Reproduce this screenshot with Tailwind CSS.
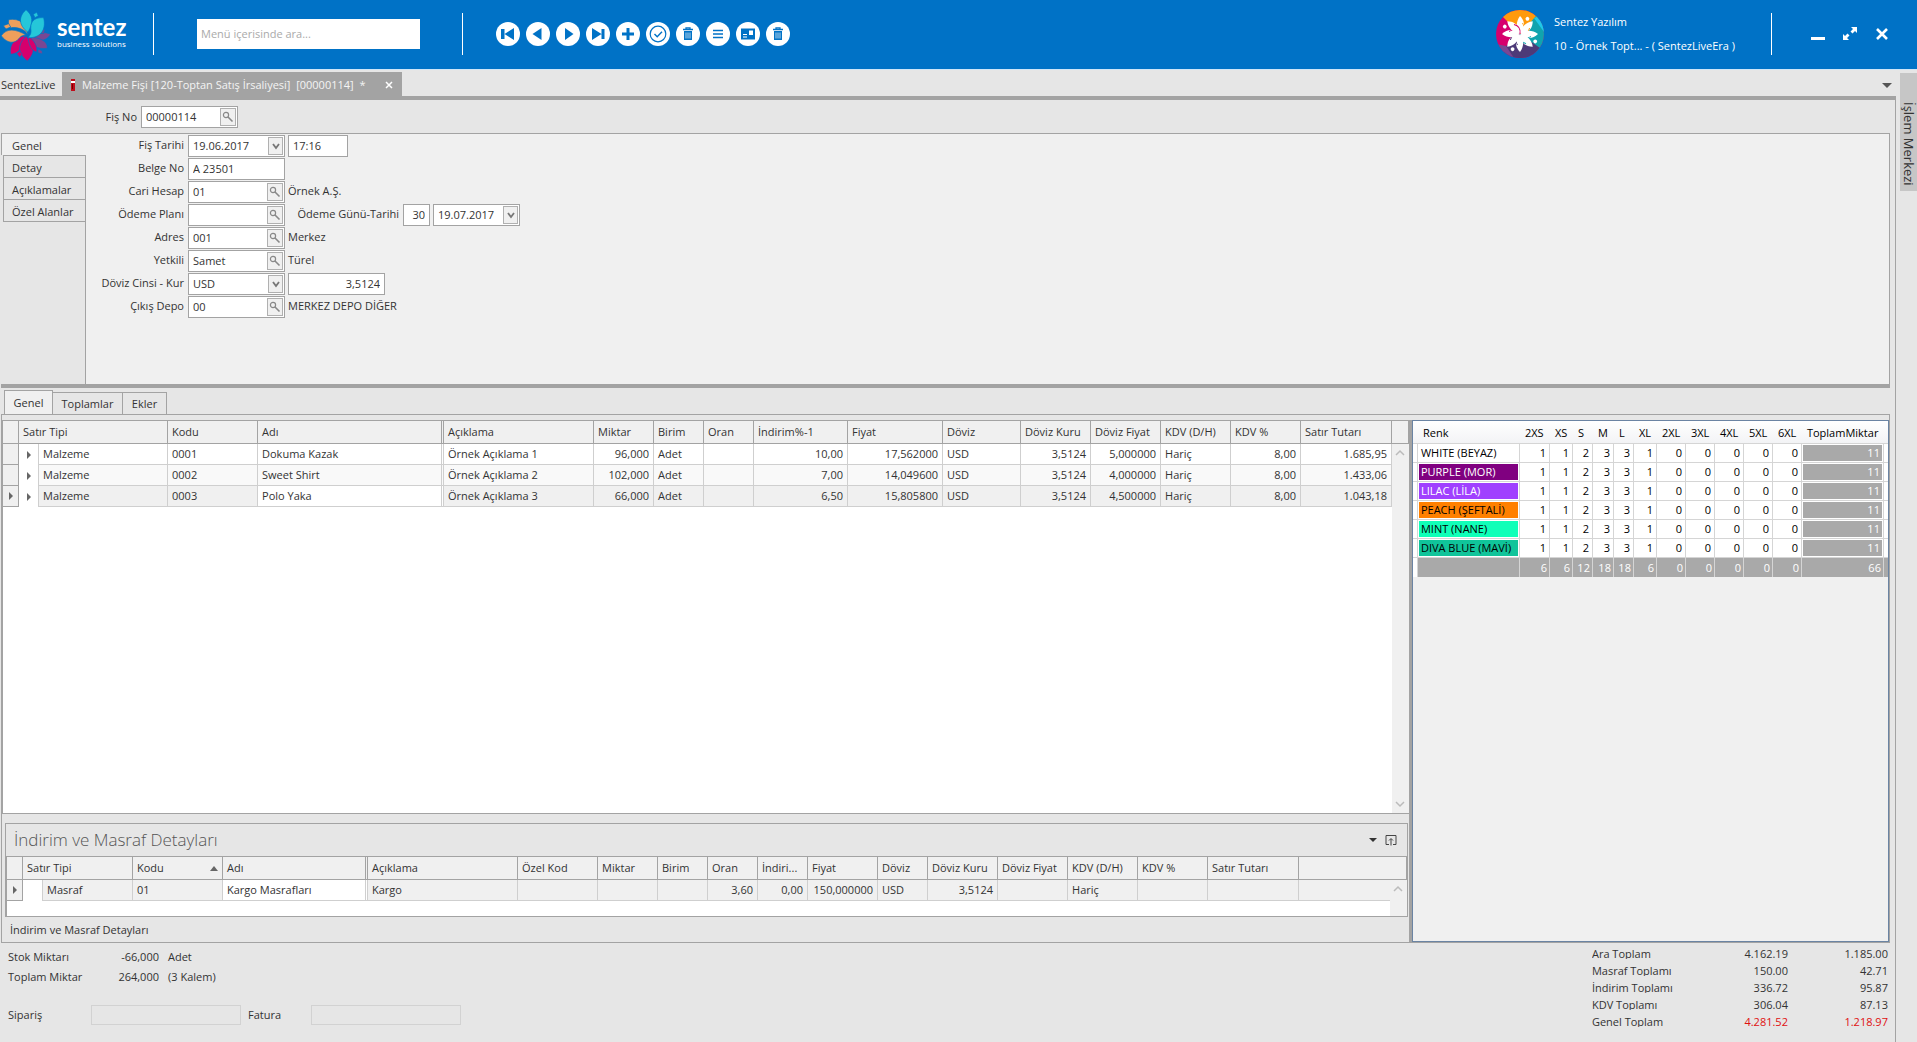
<!DOCTYPE html>
<html lang="tr">
<head>
    <meta charset="UTF-8">
    <meta name="viewport" content="width=device-width, initial-scale=1.0">
    <title>SentezLive - Malzeme Fişi</title>
    <script src="https://cdn.jsdelivr.net/npm/@tailwindcss/browser@4"></script>
</head>
<body class="flex min-h-screen flex-col bg-[#e6e6e6] font-['Open_Sans','Noto_Sans',sans-serif] text-[11px] leading-4 text-[#333]">

    <!-- Shared icons -->
    <svg class="hidden">
        <symbol id="i-search" viewBox="0 0 12 12"><circle cx="4" cy="4" r="2.6" fill="none" stroke="#888" stroke-width="1.2"/><path d="M6 6l4.500 4.500" stroke="#888" stroke-width="1.6"/></symbol>
        <symbol id="i-down" viewBox="0 0 12 12"><path d="M3 4l3 4 3-4" fill="none" stroke="#777" stroke-width="1.8"/></symbol>
        <symbol id="i-right" viewBox="0 0 4 8"><path d="M0 0l4 4-4 4z" fill="#666"/></symbol>
        <symbol id="i-trash" viewBox="0 0 24 24"><path d="M7 7.500h10M10 7V5.800h4V7" fill="none" stroke="currentColor" stroke-width="1.300"/><path d="M8 9h8v9H8z" fill="currentColor"/><path d="M10 10.500v6M12 10.500v6M14 10.500v6" stroke="#fff" stroke-width=".7"/></symbol>
    </svg>

    <!-- Header -->
    <header class="flex h-[70px] shrink-0 items-center border-b border-[#cfe6f8] bg-[#0072c6] pb-0.5 text-white">
        <svg class="h-[62px] w-[54px] shrink-0" viewBox="0 0 162 186" stroke="#0072c6" stroke-width="2">
            <g fill="#7a4793"><path d="M152 94C132 84 104 88 84 100c22 18 54 18 68-6z"/><path d="M142 136c2-24-28-34-58-34 6 26 30 38 58 34z"/><path d="M121 80l14-1-3 12-14 1zM114 138l12 5 1 10-13-4z"/></g>
            <g fill="#d6006d"><path d="M74 98c-30 6-48 28-42 56 28-2 44-30 42-56z"/><path d="M78 100c-24 22-28 50 4 74 28-28 20-50-4-74z"/><path d="M84 100c2 24 8 42 26 48 4-18-8-38-26-48z"/><path d="M50 152l9-8 8 9-8 10z"/></g>
            <g fill="#ee9f5c"><path d="M4 98c16-24 44-20 74-2-18 2-18 8-26 16C36 124 16 116 4 98z"/><path d="M26 50c34-6 58 16 56 44-8-18-36-22-48-20-8-4-10-14-8-24z"/><path d="M10 68l16-6 6 10-14 6z"/></g>
            <g fill="#25c7d9"><path d="M78 20c-22 20-24 46 6 68 16-30 16-50-6-68z"/><path d="M131 44c-32-2-42 16-38 40 0 10-4 14-9 20 36 2 56-22 47-60z"/><path d="M100 34l10-6 5 10-10 6z"/></g>
        </svg>
        <div class="ml-[3px] w-24 shrink-0 pb-1">
            <div class="font-['Lato','Open_Sans',sans-serif] text-2xl leading-6 font-bold">sentez</div>
            <div class="text-[8px] leading-[10px]">business solutions</div>
        </div>
        <div class="h-[42px] w-px shrink-0 bg-white"></div>
        <input type="text" aria-label="Menü içerisinde ara" placeholder="Menü içerisinde ara..." class="ml-[43px] h-[30px] w-[223px] min-w-0 bg-white px-1 text-[#333] placeholder:text-[#aaa] focus:outline-none">
        <div class="ml-[42px] h-[42px] w-px shrink-0 bg-white"></div>

        <!-- Record toolbar -->
        <nav class="ml-[33px] flex gap-1.5 text-[#0072c6]">
            <button aria-label="İlk" class="size-6 rounded-full bg-white"><svg viewBox="0 0 24 24"><path d="M5 7h3.500v10H5zM18 6v12L8.500 12z" fill="currentColor"/></svg></button>
            <button aria-label="Önceki" class="size-6 rounded-full bg-white"><svg viewBox="0 0 24 24"><path d="M15.500 6v12L6.500 12z" fill="currentColor"/></svg></button>
            <button aria-label="Sonraki" class="size-6 rounded-full bg-white"><svg viewBox="0 0 24 24"><path d="M9 6v12l8.500-6z" fill="currentColor"/></svg></button>
            <button aria-label="Son" class="size-6 rounded-full bg-white"><svg viewBox="0 0 24 24"><path d="M6 6v12l9.500-6zM15.500 7h3v10h-3z" fill="currentColor"/></svg></button>
            <button aria-label="Yeni" class="size-6 rounded-full bg-white"><svg viewBox="0 0 24 24"><path d="M12 6v12M6 12h12" stroke="currentColor" stroke-width="3"/></svg></button>
            <button aria-label="Kaydet" class="size-6 rounded-full bg-white"><svg viewBox="0 0 24 24" fill="none" stroke="currentColor"><circle cx="12" cy="12" r="7.800" stroke-width="1.200"/><path d="M8.500 12l2.700 2.800 4.800-5" stroke-width="1.400"/></svg></button>
            <button aria-label="Sil" class="size-6 rounded-full bg-white"><svg class="size-6"><use href="#i-trash"/></svg></button>
            <button aria-label="Liste" class="size-6 rounded-full bg-white"><svg viewBox="0 0 24 24"><path d="M7 8.500h10M7 12h10M7 15.500h10" stroke="currentColor" stroke-width="1.400"/></svg></button>
            <button aria-label="Kart" class="size-6 rounded-full bg-white"><svg viewBox="0 0 24 24"><path d="M5 6.500h14v11H5z" fill="currentColor"/><path d="M13 8.500h4V13h-4zM7 12h4v1H7zM7 14.500h4v1H7z" fill="#fff"/></svg></button>
            <button aria-label="Temizle" class="size-6 rounded-full bg-white"><svg class="size-6"><use href="#i-trash"/></svg></button>
        </nav>

        <!-- User -->
        <div class="ml-auto flex shrink-0 items-center">
            <svg class="size-12" viewBox="0 0 48 48">
                <clipPath id="round"><circle cx="24" cy="24" r="24"/></clipPath>
                <g clip-path="url(#round)">
                    <path d="M0 0h48v48H0z" fill="#d6006d"/>
                    <path d="M24 24L4 4V0h40v4z" fill="#ff9a0c"/>
                    <path d="M24 24L40 6l8 0v36h-8z" fill="#10a4ae"/>
                    <path d="M38 8l10 14V4z" fill="#1fc8ea"/>
                    <path d="M24 24L8 38v10h36V38z" fill="#4d3a78"/>
                    <path d="M0 34l10 2 8 12H4z" fill="#7a4793"/>
                </g>
                <g fill="#fff" id="avatar-petals"></g>
            </svg>
            <div class="ml-2.5 flex w-[217px] flex-col gap-2">
                <span>Sentez Yazılım</span>
                <span>10 - Örnek Topt... - ( SentezLiveEra )</span>
            </div>
            <div class="h-[42px] w-px bg-white"></div>
            <button aria-label="Küçült" class="ml-[38px]"><svg class="size-4" viewBox="0 0 16 16"><path d="M1 12.500h14" stroke="#fff" stroke-width="3"/></svg></button>
            <button aria-label="Büyüt" class="ml-4"><svg class="size-4" viewBox="0 0 16 16"><path d="M9 1h6v6l-2-2-2.500 2.500-2-2L11 3zM1 14V8l2 2 2.500-2.500 2 2L5 12l2 2z" fill="#fff"/></svg></button>
            <button aria-label="Kapat" class="mr-[27px] ml-4"><svg class="size-4" viewBox="0 0 16 16"><path d="M3 3l10 10M13 3L3 13" stroke="#fff" stroke-width="2.600"/></svg></button>
        </div>
    </header>

    <div class="flex grow">
        <div class="flex min-w-0 grow flex-col">

            <!-- Document tabs -->
            <div class="flex h-[30px] shrink-0 items-end border-b-4 border-[#a3a3a3]">
                <button class="h-6 w-[62px] pt-0.5 pl-px text-left">SentezLive</button>
                <div class="flex h-6 w-[340px] items-center bg-[#a3a3a3] px-2 pt-0.5 text-[#f4f4f4]">
                    <svg class="h-3.5 w-1.5" viewBox="0 0 6 14"><path d="M1 1h4v12H1z" fill="#c00d1c"/><path d="M1 3h4v2H1z" fill="#fff"/><path d="M2 6h1v5H2z" fill="#700"/></svg>
                    <span class="ml-1.5 whitespace-pre">Malzeme Fişi [120-Toptan Satış İrsaliyesi]  [00000114]  *</span>
                    <button aria-label="Sekmeyi kapat" class="ml-auto"><svg class="size-2.5" viewBox="0 0 10 10"><path d="M2 2l6 6M8 2L2 8" stroke="#fff" stroke-width="1.500"/></svg></button>
                </div>
                <button aria-label="Sekmeler" class="mr-1 mb-2 ml-auto"><svg class="h-[5px] w-2.5" viewBox="0 0 10 5"><path d="M0 0h10L5 5z" fill="#555"/></svg></button>
            </div>

            <main class="flex grow flex-col border-r border-[#a3a3a3] pr-[5px]">

                <div class="flex h-[33px] items-center">
                    <label for="fisNo" class="w-[137px] text-right">Fiş No</label>
                    <div class="ml-1 flex h-[22px] w-[97px] items-center border border-[#a3a3a3] bg-white pr-px">
                        <input id="fisNo" value="00000114" class="w-full min-w-0 pl-1 focus:outline-none">
                        <button aria-label="Fiş ara" class="flex h-[18px] w-4 shrink-0 items-center justify-center border border-[#b0b0b0] bg-[#f0f0f0]"><svg class="size-3"><use href="#i-search"/></svg></button>
                    </div>
                </div>

                <!-- Form -->
                <section class="ml-px flex h-[251px]">
                    <div class="flex w-[85px] flex-col">
                        <button class="h-[22px] border-t border-l border-[#a3a3a3] bg-[#f0f0f0] pt-0.5 pl-[10px] text-left">Genel</button>
                        <button class="ml-0.5 h-[22px] border-t border-r border-l border-[#a3a3a3] pt-0.5 pl-2 text-left">Detay</button>
                        <button class="ml-0.5 h-[22px] border-t border-r border-l border-[#a3a3a3] pt-0.5 pl-2 text-left">Açıklamalar</button>
                        <button class="ml-0.5 h-[23px] border border-[#a3a3a3] pt-0.5 pl-2 text-left">Özel Alanlar</button>
                        <div class="grow border-r border-[#a3a3a3]"></div>
                    </div>
                    <div class="grow border-t border-r border-[#a3a3a3] bg-[#f0f0f0] pt-px">
                        <div class="grid grid-cols-[98px_98px_1fr] gap-x-[3px] gap-y-px [&>label]:pt-0.5 [&>label]:text-right [&>span]:pt-0.5">
                            <label for="tarih">Fiş Tarihi</label>
                            <div class="ml-px flex h-[22px] items-center border border-[#a3a3a3] bg-white pr-px">
                                <input id="tarih" value="19.06.2017" class="w-full min-w-0 pl-1 focus:outline-none">
                                <button aria-label="Takvim" class="flex h-[18px] w-[15px] shrink-0 items-center justify-center border border-[#b0b0b0] bg-[#f0f0f0]"><svg class="size-3"><use href="#i-down"/></svg></button>
                            </div>
                            <input aria-label="Saat" value="17:16" class="h-[22px] w-[60px] border border-[#a3a3a3] bg-white pb-px pl-1">

                            <label for="belge">Belge No</label>
                            <input id="belge" value="A 23501" class="ml-px h-[22px] min-w-0 border border-[#a3a3a3] bg-white pb-px pl-1">
                            <span></span>

                            <label for="cari">Cari Hesap</label>
                            <div class="ml-px flex h-[22px] items-center border border-[#a3a3a3] bg-white pr-px">
                                <input id="cari" value="01" class="w-full min-w-0 pl-1 focus:outline-none">
                                <button aria-label="Cari ara" class="flex h-[18px] w-4 shrink-0 items-center justify-center border border-[#b0b0b0] bg-[#f0f0f0]"><svg class="size-3"><use href="#i-search"/></svg></button>
                            </div>
                            <span>Örnek A.Ş.</span>

                            <label for="plan">Ödeme Planı</label>
                            <div class="ml-px flex h-[22px] items-center border border-[#a3a3a3] bg-white pr-px">
                                <input id="plan" class="w-full min-w-0 pl-1 focus:outline-none">
                                <button aria-label="Plan ara" class="flex h-[18px] w-4 shrink-0 items-center justify-center border border-[#b0b0b0] bg-[#f0f0f0]"><svg class="size-3"><use href="#i-search"/></svg></button>
                            </div>
                            <div class="flex">
                                <label for="gun" class="w-[111px] pt-0.5 text-right">Ödeme Günü-Tarihi</label>
                                <input id="gun" value="30" class="ml-1 h-[22px] w-[27px] border border-[#a3a3a3] bg-white pr-1 pb-px text-right">
                                <div class="ml-[3px] flex h-[22px] w-[87px] items-center border border-[#a3a3a3] bg-white pr-px">
                                    <input aria-label="Ödeme tarihi" value="19.07.2017" class="w-full min-w-0 pl-1 focus:outline-none">
                                    <button aria-label="Takvim" class="flex h-[18px] w-[15px] shrink-0 items-center justify-center border border-[#b0b0b0] bg-[#f0f0f0]"><svg class="size-3"><use href="#i-down"/></svg></button>
                                </div>
                            </div>

                            <label for="adres">Adres</label>
                            <div class="ml-px flex h-[22px] items-center border border-[#a3a3a3] bg-white pr-px">
                                <input id="adres" value="001" class="w-full min-w-0 pl-1 focus:outline-none">
                                <button aria-label="Adres ara" class="flex h-[18px] w-4 shrink-0 items-center justify-center border border-[#b0b0b0] bg-[#f0f0f0]"><svg class="size-3"><use href="#i-search"/></svg></button>
                            </div>
                            <span>Merkez</span>

                            <label for="yetkili">Yetkili</label>
                            <div class="ml-px flex h-[22px] items-center border border-[#a3a3a3] bg-white pr-px">
                                <input id="yetkili" value="Samet" class="w-full min-w-0 pl-1 focus:outline-none">
                                <button aria-label="Yetkili ara" class="flex h-[18px] w-4 shrink-0 items-center justify-center border border-[#b0b0b0] bg-[#f0f0f0]"><svg class="size-3"><use href="#i-search"/></svg></button>
                            </div>
                            <span>Türel</span>

                            <label for="doviz">Döviz Cinsi - Kur</label>
                            <div class="relative ml-px h-[22px] border border-[#a3a3a3] bg-white">
                                <select id="doviz" class="h-full w-full appearance-none pl-1 focus:outline-none">
                                    <option>USD</option>
                                    <option>EUR</option>
                                </select>
                                <span class="pointer-events-none absolute top-px right-px flex h-[18px] w-[15px] items-center justify-center border border-[#b0b0b0] bg-[#f0f0f0]"><svg class="size-3"><use href="#i-down"/></svg></span>
                            </div>
                            <input aria-label="Kur" value="3,5124" class="h-[22px] w-[97px] border border-[#a3a3a3] bg-white pr-1 pb-px text-right">

                            <label for="depo">Çıkış Depo</label>
                            <div class="ml-px flex h-[22px] items-center border border-[#a3a3a3] bg-white pr-px">
                                <input id="depo" value="00" class="w-full min-w-0 pl-1 focus:outline-none">
                                <button aria-label="Depo ara" class="flex h-[18px] w-4 shrink-0 items-center justify-center border border-[#b0b0b0] bg-[#f0f0f0]"><svg class="size-3"><use href="#i-search"/></svg></button>
                            </div>
                            <span>MERKEZ DEPO DİĞER</span>
                        </div>
                    </div>
                </section>

                <div class="ml-px h-1 bg-[#a3a3a3]"></div>

                <!-- Detail tabs -->
                <div class="flex h-[26px] items-end pl-1">
                    <button class="h-6 w-[49px] border-t border-r border-l border-[#a3a3a3] bg-[#f0f0f0]">Genel</button>
                    <button class="h-[22px] w-[70px] border-t border-r border-[#a3a3a3]">Toplamlar</button>
                    <button class="h-[22px] w-11 border-t border-r border-[#a3a3a3]">Ekler</button>
                </div>

                <section class="ml-px flex grow border border-[#a3a3a3]">
                    <!-- Left: lines + discount details -->
                    <div class="flex min-w-0 grow flex-col pt-[5px]">
                        <div class="flex grow flex-col border-y border-l border-[#a3a3a3] bg-white">
                            <table class="w-full table-fixed border-separate border-spacing-0 whitespace-nowrap">
                                <colgroup id="line-cols"></colgroup>
                                <thead><tr id="line-head" class="h-[23px] bg-[#f0f0f0] text-left"></tr></thead>
                                <tbody id="line-rows"></tbody>
                            </table>
                            <div class="-mt-[63px] ml-auto flex w-[17px] grow flex-col items-center justify-between bg-[#f0f0f0] py-1">
                                <svg class="size-2.5" viewBox="0 0 10 10"><path d="M1 7l4-4 4 4" fill="none" stroke="#bbb" stroke-width="1.500"/></svg>
                                <svg class="size-2.5" viewBox="0 0 10 10"><path d="M1 3l4 4 4-4" fill="none" stroke="#bbb" stroke-width="1.500"/></svg>
                            </div>
                        </div>

                        <div class="mt-[9px] mr-px ml-[3px] h-[94px] border border-[#a3a3a3]">
                            <div class="flex h-8 items-center justify-between pr-2.5 pl-2">
                                <h2 class="text-[17px] font-light text-[#555]">İndirim ve Masraf Detayları</h2>
                                <div class="flex items-center gap-2">
                                    <button aria-label="Menü"><svg class="h-1 w-2" viewBox="0 0 8 4"><path d="M0 0h8L4 4z" fill="#333"/></svg></button>
                                    <button aria-label="Sabitle"><svg class="size-3" viewBox="0 0 12 12" fill="none" stroke="#444"><path d="M4 10.500H1v-9h10v9H8M6 11.500V5M4 6.500l2-2 2 2"/></svg></button>
                                </div>
                            </div>
                            <div class="h-[60px] border-t border-l border-[#a3a3a3] bg-white">
                                <table class="w-full table-fixed border-separate border-spacing-0 whitespace-nowrap">
                                    <colgroup id="cost-cols"></colgroup>
                                    <thead><tr id="cost-head" class="h-[23px] bg-[#f0f0f0] text-left"></tr></thead>
                                    <tbody id="cost-rows"></tbody>
                                </table>
                                <div class="-mt-[21px] ml-auto h-9 w-[17px] bg-[#f0f0f0] pt-1">
                                    <svg class="mx-auto size-2.5" viewBox="0 0 10 10"><path d="M1 7l4-4 4 4" fill="none" stroke="#bbb" stroke-width="1.500"/></svg>
                                </div>
                            </div>
                        </div>
                        <div class="flex h-[25px] items-center pt-px pl-2">İndirim ve Masraf Detayları</div>
                    </div>

                    <!-- Right: colour / size matrix -->
                    <div class="mt-[5px] w-[480px] shrink-0 border-l-[3px] border-[#a3a3a3]">
                        <div class="h-full border border-[#6b84a3] bg-[#f0f0f0] text-black">
                            <table class="w-full table-fixed border-separate border-spacing-0 whitespace-nowrap">
                                <colgroup id="size-cols"></colgroup>
                                <thead><tr id="size-head" class="h-[23px] bg-linear-to-b from-white to-[#f2f3f5] text-left"></tr></thead>
                                <tbody id="size-rows"></tbody>
                            </table>
                        </div>
                    </div>
                </section>

                <!-- Footer totals -->
                <footer class="flex h-[99px] justify-between">
                    <div class="pt-1.5 pl-2">
                        <div class="grid grid-cols-[83px_68px_1fr] gap-y-1">
                            <span>Stok Miktarı</span><span class="text-right">-66,000</span><span class="pl-[9px]">Adet</span>
                            <span>Toplam Miktar</span><span class="text-right">264,000</span><span class="pl-[9px]">(3 Kalem)</span>
                        </div>
                        <div class="mt-5 flex items-center">
                            <label for="siparis" class="w-[83px]">Sipariş</label>
                            <input id="siparis" disabled class="h-5 w-[150px] border border-[#d2d2d2]">
                            <label for="fatura" class="w-[70px] pl-[7px]">Fatura</label>
                            <input id="fatura" disabled class="h-5 w-[150px] border border-[#d2d2d2]">
                        </div>
                    </div>
                    <dl id="totals" class="grid h-[85px] grid-cols-[99px_97px_100px] pt-0.5 pr-0.5"></dl>
                </footer>
            </main>
        </div>

        <!-- Collapsed side panel -->
        <aside class="w-[21px] shrink-0 pt-[3px] pl-1">
            <button class="h-[118px] w-full bg-[#c6c6c6] pt-[29px] text-left text-[13px] leading-[17px] whitespace-nowrap [writing-mode:vertical-rl]">İşlem Merkezi</button>
        </aside>
    </div>

    <script>
        const $ = (id) => document.getElementById(id);
        const cols = (list) => list.map((w) => `<col${w ? ` style="width:${w}px"` : ''}>`).join('');
        const arrow = '<svg class="mx-auto h-2 w-1"><use href="#i-right"/></svg>';

        const headCell = (text, i) => `
            <th ${i === 1 ? 'colspan="2"' : ''} class="overflow-hidden border-b border-[#a3a3a3] ${text === 'Adı' ? 'border-r-3 border-double' : 'border-r'} px-1 font-normal">${text}</th>`;

        // kinds: l = text, r = number, e = expander, h = row handle
        function gridRow(cells, kinds, bg, editing) {
            return `<tr class="h-[21px] ${bg}">` + cells.map((text, i) => {
                const kind = kinds[i];
                if (kind === 'h') return `<td class="border-r border-b border-[#a3a3a3] bg-[#f0f0f0]">${text}</td>`;
                if (kind === 'e') return `<td class="border-r border-[#cfcfcf] bg-white">${text}</td>`;
                const line = i === 4 ? 'border-r-3 border-double' : 'border-r';
                const fill = i === 4 && editing ? 'bg-white' : '';
                const align = kind === 'r' ? 'text-right' : '';
                return `<td class="border-b border-[#cfcfcf] px-1 ${line} ${fill} ${align}">${text}</td>`;
            }).join('') + '</tr>';
        }

        // Document lines
        $('line-cols').innerHTML = cols([16, 20, 129, 90, 186, 150, 60, 50, 50, 94, 95, 78, 70, 70, 70, 70, 91, 0]);
        $('line-head').innerHTML = ['', 'Satır Tipi', 'Kodu', 'Adı', 'Açıklama', 'Miktar', 'Birim', 'Oran', 'İndirim%-1', 'Fiyat', 'Döviz', 'Döviz Kuru', 'Döviz Fiyat', 'KDV (D/H)', 'KDV %', 'Satır Tutarı', ''].map(headCell).join('');
        const lineKinds = 'hellllrllrrlrrlrr';
        $('line-rows').innerHTML =
            gridRow(['', arrow, 'Malzeme', '0001', 'Dokuma Kazak', 'Örnek Açıklama 1', '96,000', 'Adet', '', '10,00', '17,562000', 'USD', '3,5124', '5,000000', 'Hariç', '8,00', '1.685,95'], lineKinds, 'bg-white', false) +
            gridRow(['', arrow, 'Malzeme', '0002', 'Sweet Shirt', 'Örnek Açıklama 2', '102,000', 'Adet', '', '7,00', '14,049600', 'USD', '3,5124', '4,000000', 'Hariç', '8,00', '1.433,06'], lineKinds, 'bg-[#f9f9f9]', false) +
            gridRow([arrow, arrow, 'Malzeme', '0003', 'Polo Yaka', 'Örnek Açıklama 3', '66,000', 'Adet', '', '6,50', '15,805800', 'USD', '3,5124', '4,500000', 'Hariç', '8,00', '1.043,18'], lineKinds, 'bg-[#f0f0f0]', true);

        // Discounts and costs
        const sorted = '<span class="flex items-center justify-between">Kodu<svg class="h-[5px] w-2" viewBox="0 0 8 5"><path d="M0 5h8L4 0z" fill="#666"/></svg></span>';
        $('cost-cols').innerHTML = cols([16, 20, 90, 90, 145, 150, 80, 60, 50, 50, 50, 70, 50, 70, 70, 70, 70, 91, 0]);
        $('cost-head').innerHTML = ['', 'Satır Tipi', sorted, 'Adı', 'Açıklama', 'Özel Kod', 'Miktar', 'Birim', 'Oran', 'İndiri...', 'Fiyat', 'Döviz', 'Döviz Kuru', 'Döviz Fiyat', 'KDV (D/H)', 'KDV %', 'Satır Tutarı', ''].map(headCell).join('');
        $('cost-rows').innerHTML =
            gridRow([arrow, '', 'Masraf', '01', 'Kargo Masrafları', 'Kargo', '', '', '', '3,60', '0,00', '150,000000', 'USD', '3,5124', '', 'Hariç', '', '', ''], 'helllllllrrrlrlllll', 'bg-[#f0f0f0]', true);

        // Size matrix
        const sizes = ['2XS', 'XS', 'S', 'M', 'L', 'XL', '2XL', '3XL', '4XL', '5XL', '6XL'];
        const colours = [
            ['WHITE (BEYAZ)', 'bg-white'],
            ['PURPLE (MOR)', 'bg-[#800080] text-white'],
            ['LILAC (LİLA)', 'bg-[#a040ff] text-white'],
            ['PEACH (ŞEFTALİ)', 'bg-[#ff8000]'],
            ['MINT (NANE)', 'bg-[#10ffb8]'],
            ['DIVA BLUE (MAVİ)', 'bg-[#10c49a]'],
        ];
        const counts = [1, 1, 2, 3, 3, 1, 0, 0, 0, 0, 0];
        $('size-cols').innerHTML = cols([5, 102, 30, 23, 20, 21, 20, 23, 29, 29, 29, 29, 29, 82, 0]);
        $('size-head').innerHTML = ['', 'Renk', ...sizes, 'ToplamMiktar', ''].map((s) =>
            `<th class="border-b border-[#d5d5d5] pt-0.5 pl-[5px] font-normal">${s}</th>`).join('');
        $('size-rows').innerHTML = colours.map(([name, tone]) => `
            <tr class="h-[19px] bg-white">
                <td class="border-r border-b border-[#d5d5d5]"></td>
                <td class="border-r border-b border-[#d5d5d5] p-px"><div class="h-4 overflow-hidden pl-0.5 leading-4 ${tone}">${name}</div></td>
                ${counts.map((n) => `<td class="border-r border-b border-[#d5d5d5] pr-[3px] text-right">${n}</td>`).join('')}
                <td class="border-r border-b border-[#d5d5d5] p-px"><div class="h-4 bg-[#a9a9a9] pr-0.5 text-right leading-4 text-white">11</div></td>
                <td class="border-b border-[#d5d5d5]"></td>
            </tr>`).join('') + `
            <tr class="h-[19px] bg-[#a9a9a9] text-white">
                <td class="border-r border-[#d5d5d5] bg-white"></td>
                ${['', 6, 6, 12, 18, 18, 6, 0, 0, 0, 0, 0, 66].map((n) => `<td class="border-r border-[#d5d5d5] pr-0.5 text-right">${n}</td>`).join('')}
                <td></td>
            </tr>`;

        // Totals
        $('totals').innerHTML = [
            ['Ara Toplam', '4.162.19', '1.185.00', ''],
            ['Masraf Toplamı', '150.00', '42.71', ''],
            ['İndirim Toplamı', '336.72', '95.87', ''],
            ['KDV Toplamı', '306.04', '87.13', ''],
            ['Genel Toplam', '4.281.52', '1.218.97', 'text-[#e01010]'],
        ].map(([label, a, b, tone]) => `
            <dt class="h-[14px] overflow-hidden leading-[17px]">${label}</dt>
            <dd class="h-[17px] text-right leading-[17px] ${tone}">${a}</dd>
            <dd class="h-[17px] text-right leading-[17px] ${tone}">${b}</dd>`).join('');

        // Avatar flower
        const swirl = ['#ff9a0c', '#ff9a0c', '#10a4ae', '#10a4ae', '#4d3a78', '#4d3a78', '#d6006d', '#d6006d'];
        $('avatar-petals').innerHTML = swirl.map((c, i) => `
            <g transform="rotate(${i * 45} 24 24)">
                <path d="M24 24C20 19 19.500 12 24 6c4 4 5 9 3 13z"/>
                <path d="M24 24c4-3 5-7 2.500-11" fill="none" stroke="${c}" stroke-width="1"/>
                ${i % 2 ? '<circle cx="18.500" cy="8" r="1.900"/>' : ''}
            </g>`).join('');
    </script>
</body>
</html>
